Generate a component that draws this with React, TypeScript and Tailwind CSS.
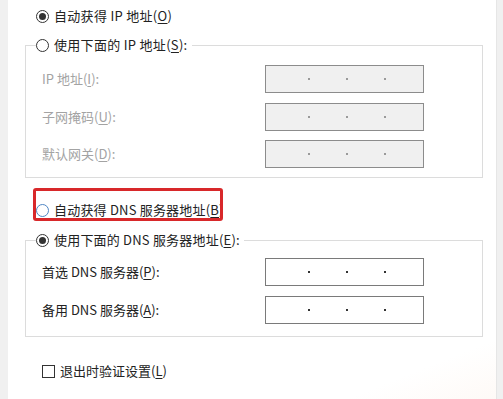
import type { ReactNode } from "react"

function Radio({ checked, hover }: { checked?: boolean; hover?: boolean }) {
  return (
    <span
      className={`flex h-[13px] w-[13px] shrink-0 items-center justify-center rounded-full border bg-white ${
        hover ? "border-[#4f86c4]" : "border-[#333]"
      }`}
    >
      {checked && <span className="h-[7px] w-[7px] rounded-full bg-[#333]" />}
    </span>
  )
}

function Key({ children }: { children: ReactNode }) {
  return <span className="underline underline-offset-2">{children}</span>
}

function IpBox({ disabled }: { disabled?: boolean }) {
  const dot = disabled ? "bg-[#9a9a9a]" : "bg-[#333]"
  return (
    <div
      className={`flex h-[28px] w-[159px] items-center gap-[36px] border pl-[42px] ${
        disabled ? "border-[#8c8c8c] bg-[#f0f0f0]" : "border-[#7a7a7a] bg-white"
      }`}
    >
      <span className={`h-[2px] w-[2px] ${dot}`} />
      <span className={`h-[2px] w-[2px] ${dot}`} />
      <span className={`h-[2px] w-[2px] ${dot}`} />
    </div>
  )
}

function Row({ label, disabled }: { label: ReactNode; disabled?: boolean }) {
  return (
    <div className="flex items-center">
      <span className={`ml-[6px] w-[223px] ${disabled ? "text-[#a3a3a3]" : "text-[#222]"}`}>{label}</span>
      <IpBox disabled={disabled} />
    </div>
  )
}

export default function App() {
  return (
    <div className="relative flex h-[399px] w-[503px] overflow-hidden bg-white font-['Noto_Sans_CJK_SC','Noto_Sans',sans-serif] text-[13px] leading-[18px] text-[#222]">
      <div className="w-[8px] bg-[#f0f0f0]" />

      <div className="flex-1 pt-[7px]">
        <div className="ml-[28px] flex h-[18px] items-center gap-[5px]">
          <Radio checked />
          <span className="tracking-[0.3px]">
            自动获得 IP 地址(<Key>O</Key>)
          </span>
        </div>

        <fieldset className="ml-[17px] mt-[11px] w-[458px] border border-[#dcdcdc] px-[10px] pb-[9px]">
          <legend className="flex h-[18px] items-center gap-[5px] pr-[4px]">
            <Radio />
            <span className="tracking-[0.3px]">
              使用下面的 IP 地址(<Key>S</Key>):
            </span>
          </legend>
          <div className="mt-[11px] flex flex-col gap-[9.5px]">
            <Row
              disabled
              label={
                <>
                  IP 地址(<Key>I</Key>):
                </>
              }
            />
            <Row
              disabled
              label={
                <>
                  子网掩码(<Key>U</Key>):
                </>
              }
            />
            <Row
              disabled
              label={
                <>
                  默认网关(<Key>D</Key>):
                </>
              }
            />
          </div>
        </fieldset>

        <div className="relative ml-[28px] mt-[23px] flex h-[18px] items-center gap-[5px]">
          <Radio hover />
          <span className="tracking-[0.2px]">
            自动获得 DNS 服务器地址(<Key>B</Key>)
          </span>
          <div className="absolute left-[-3px] top-[-13px] h-[33px] w-[190px] rounded-[3px] border-[3px] border-[#d8282a]" />
        </div>

        <fieldset className="ml-[17px] mt-[12px] w-[458px] border border-[#dcdcdc] px-[10px] pb-[12px]">
          <legend className="flex h-[18px] items-center gap-[5px] pr-[4px]">
            <Radio checked />
            <span className="tracking-[0.2px]">
              使用下面的 DNS 服务器地址(<Key>E</Key>):
            </span>
          </legend>
          <div className="mt-[9px] flex flex-col gap-[10px]">
            <Row
              label={
                <>
                  首选 DNS 服务器(<Key>P</Key>):
                </>
              }
            />
            <Row
              label={
                <>
                  备用 DNS 服务器(<Key>A</Key>):
                </>
              }
            />
          </div>
        </fieldset>

        <div className="ml-[34px] mt-[25px] flex h-[18px] items-center gap-[5px]">
          <span className="h-[13px] w-[13px] border border-[#333] bg-white" />
          <span>
            退出时验证设置(<Key>L</Key>)
          </span>
        </div>
      </div>

      <div className="w-[7px] border-l border-[#e6e6e6] bg-[#f0f0f0]" />
      <div className="pointer-events-none absolute bottom-0 right-[7px] h-[60px] w-[150px] bg-gradient-to-br from-transparent via-transparent to-[#fdf4ee]/50" />
    </div>
  )
}
